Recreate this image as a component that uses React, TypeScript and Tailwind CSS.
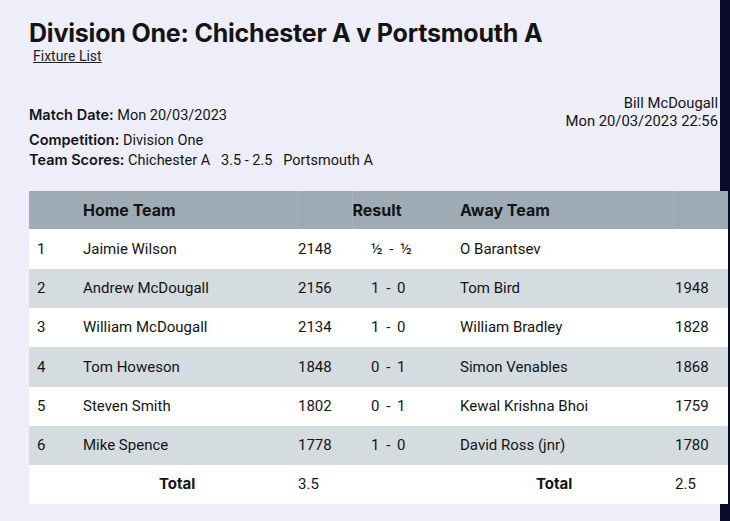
import React from 'react'

type Board = {
  no: number
  home: string
  homeRating: string
  result: string
  away: string
  awayRating: string
}

const BOARDS: Board[] = [
  { no: 1, home: 'Jaimie Wilson', homeRating: '2148', result: '½ - ½', away: 'O Barantsev', awayRating: '' },
  { no: 2, home: 'Andrew McDougall', homeRating: '2156', result: '1 - 0', away: 'Tom Bird', awayRating: '1948' },
  { no: 3, home: 'William McDougall', homeRating: '2134', result: '1 - 0', away: 'William Bradley', awayRating: '1828' },
  { no: 4, home: 'Tom Howeson', homeRating: '1848', result: '0 - 1', away: 'Simon Venables', awayRating: '1868' },
  { no: 5, home: 'Steven Smith', homeRating: '1802', result: '0 - 1', away: 'Kewal Krishna Bhoi', awayRating: '1759' },
  { no: 6, home: 'Mike Spence', homeRating: '1778', result: '1 - 0', away: 'David Ross (jnr)', awayRating: '1780' },
]

const ROW_HEIGHTS = ['h-[40px]', 'h-[39px]', 'h-[39px]', 'h-[40px]', 'h-[39px]', 'h-[39px]']

const bodyFont = "font-['Roboto','Liberation_Sans',sans-serif]"
const headFont = "font-['Inter','Liberation_Sans',sans-serif]"

export default function App() {
  return (
    <div className={`w-[730px] h-[521px] flex overflow-hidden bg-[#eeeefb] text-[#141414] ${bodyFont}`}>
      <div className="relative z-10 w-[720px] shrink-0 pl-[29px] pt-[18px]">
        {/* title */}
        <h1 className={`text-[25px] leading-[30px] font-bold tracking-[-0.2px] ${headFont}`}>
          Division One: Chichester A v Portsmouth A
        </h1>
        <a href="#" className="block ml-[4px] -mt-[1px] text-[14px] leading-[18px] underline text-[#222]">
          Fixture List
        </a>

        {/* match info */}
        <div className="flex justify-between mt-[27px] pr-[2px]">
          <div className="pt-[13px] text-[14.5px]">
            <p className="leading-[20px]">
              <span className={`font-semibold ${headFont}`}>Match Date:</span> Mon 20/03/2023
            </p>
            <p className="leading-[20px] mt-[4px]">
              <span className={`font-semibold ${headFont}`}>Competition:</span> Division One
            </p>
            <p className="leading-[20px] -mt-[1px]">
              <span className={`font-semibold ${headFont}`}>Team Scores:</span> Chichester A{'\u00a0\u00a0 '}3.5 - 2.5{'\u00a0\u00a0 '}Portsmouth A
            </p>
          </div>
          <div className="pt-[2px] text-right text-[14.8px] leading-[18px]">
            <p>Bill McDougall</p>
            <p>Mon 20/03/2023 22:56</p>
          </div>
        </div>

        {/* boards */}
        <table className="mt-[20px] w-[699px] table-fixed border-collapse text-[15px]">
          <colgroup>
            <col className="w-[46px]" />
            <col className="w-[222px]" />
            <col className="w-[55px]" />
            <col className="w-[100px]" />
            <col className="w-[221px]" />
            <col className="w-[55px]" />
          </colgroup>
          <thead>
            <tr className={`h-[38px] bg-[#9eabb5] text-left text-[16px] font-bold ${headFont}`}>
              <th></th>
              <th className="pl-[8px] font-bold">Home Team</th>
              <th className="border-l border-[#a9b5be]"></th>
              <th className="border-l border-[#a9b5be] font-bold">Result</th>
              <th className="pl-[8px] font-bold">Away Team</th>
              <th className="border-l border-[#a9b5be]"></th>
            </tr>
          </thead>
          <tbody>
            {BOARDS.map((b, i) => (
              <tr key={b.no} className={`${ROW_HEIGHTS[i]} ${i % 2 === 0 ? 'bg-white' : 'bg-[#d4dce0]'}`}>
                <td className="pl-[8px]">{b.no}</td>
                <td className="pl-[8px]">{b.home}</td>
                <td className="pl-[1px]">{b.homeRating}</td>
                <td className="pl-[19px] [word-spacing:3px]">{b.result}</td>
                <td className="pl-[8px]">{b.away}</td>
                <td className="pl-[2px]">{b.awayRating}</td>
              </tr>
            ))}
            <tr className="h-[39px] bg-white">
              <td></td>
              <td className={`pl-[84px] font-bold ${headFont}`}>Total</td>
              <td className="pl-[1px]">3.5</td>
              <td></td>
              <td className={`pl-[84px] font-bold ${headFont}`}>Total</td>
              <td className="pl-[2px]">2.5</td>
            </tr>
          </tbody>
        </table>
      </div>
      <div className="w-[10px] shrink-0 bg-[#0a0a2c]" />
    </div>
  )
}
